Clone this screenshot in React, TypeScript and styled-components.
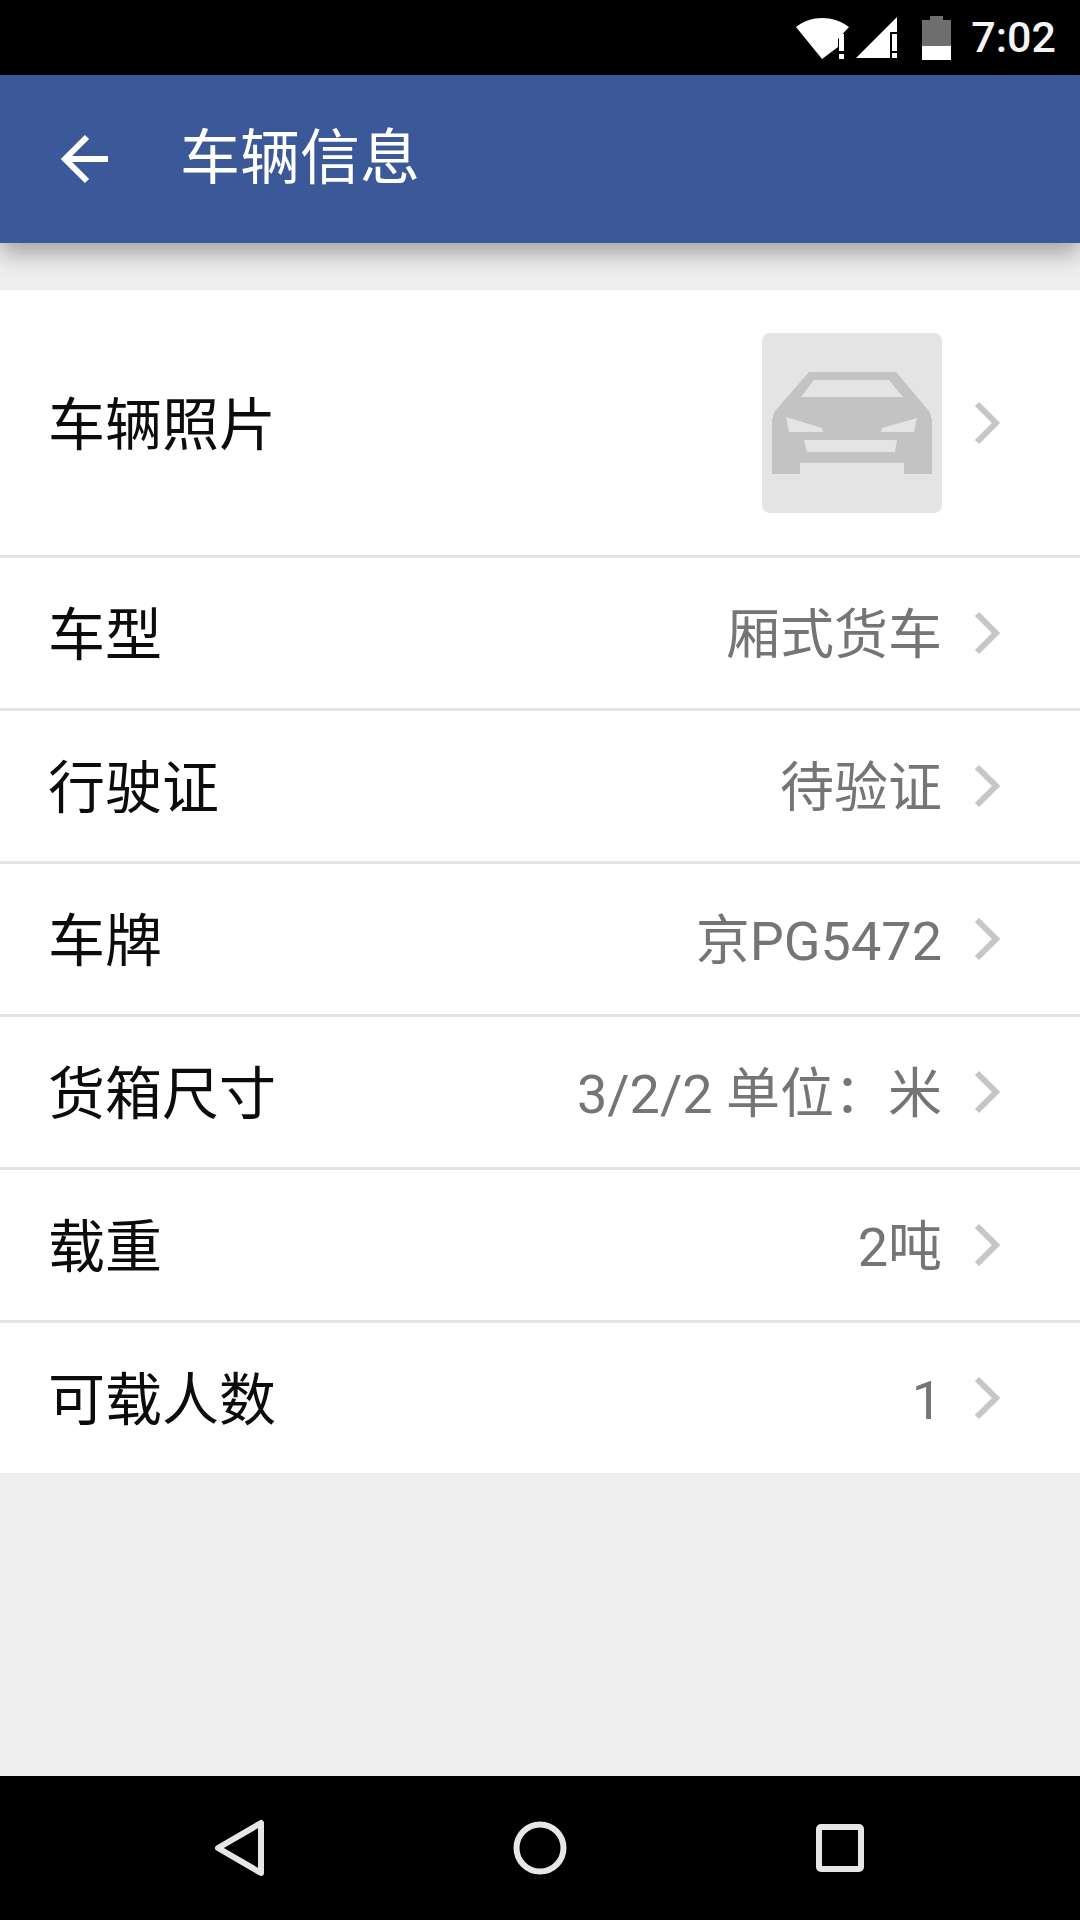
import { ReactNode } from 'react';
import styled, { createGlobalStyle } from 'styled-components';

const GlobalStyle = createGlobalStyle`
    html, body {
        margin: 0;
        padding: 0;
        background: #eeeeee;
    }
    * {
        box-sizing: border-box;
    }
`;

const Page = styled.div`
    width: 1080px;
    height: 1920px;
    display: flex;
    flex-direction: column;
    overflow: hidden;
    background: #eeeeee;
    font-family: Roboto, 'Noto Sans CJK SC', sans-serif;
`;

const StatusBar = styled.div`
    flex: 0 0 75px;
    display: flex;
    align-items: center;
    justify-content: flex-end;
    padding-right: 24px;
    background: #000;
`;

const StatusIcon = styled.svg<{ $gap: number }>`
    display: block;
    margin-right: ${({ $gap }) => $gap}px;
`;

const Clock = styled.span`
    color: #f4f4f4;
    font-size: 43px;
    font-weight: 500;
    line-height: 75px;
`;

const AppBar = styled.header`
    flex: 0 0 168px;
    position: relative;
    z-index: 1;
    display: flex;
    align-items: center;
    padding-left: 58px;
    background: #3b5998;
    box-shadow: 0 10px 22px rgba(0, 0, 0, 0.32);
`;

const BackArrow = styled.svg`
    display: block;
    flex: none;
    margin-right: 68px;
`;

const Title = styled.h1`
    margin: 0;
    color: #fff;
    font-size: 60px;
    font-weight: 400;
    line-height: 1;
`;

const Content = styled.main`
    flex: 1;
    padding-top: 47px;
`;

const List = styled.div`
    background: #fff;
`;

const Row = styled.div<{ $height: number; $last?: boolean }>`
    height: ${({ $height }) => $height}px;
    display: flex;
    align-items: center;
    justify-content: space-between;
    padding: 0 78px 0 48px;
    border-bottom: ${({ $last }) => ($last ? 'none' : '3px solid #e4e4e4')};
`;

const Label = styled.span`
    padding-top: 5px;
    color: #0c0c0c;
    font-size: 57px;
    line-height: 1;
`;

const RowEnd = styled.div`
    display: flex;
    align-items: center;
    gap: 32px;
`;

const Value = styled.span`
    padding-top: 5px;
    color: #757575;
    font-size: 54px;
    line-height: 1;
`;

const Thumb = styled.div`
    width: 180px;
    height: 180px;
    border-radius: 8px;
    background: #e4e4e4;
`;

const NavBar = styled.nav`
    flex: 0 0 144px;
    display: grid;
    grid-template-columns: repeat(3, 300px);
    justify-items: center;
    align-items: center;
    padding: 0 90px;
    background: #000;
`;

function Chevron() {
    return (
        <svg width="28" height="48" viewBox="0 0 28 48">
            <path d="M3 5 L22 24 L3 43" fill="none" stroke="#c6c6c6" strokeWidth="6" />
        </svg>
    );
}

function CarPlaceholder() {
    return (
        <Thumb>
            <svg width="180" height="180" viewBox="0 0 180 180">
                <path
                    fillRule="evenodd"
                    fill="#c3c3c3"
                    d="M47 39 H134 L167 78 L170 87 V141 H142 V130 H38 V141 H10 V87 L13 78 Z
                       M52 47 L39 64 H141 L127 47 Z
                       M24 84 L60 95 L61 99 H27 Z
                       M155 85 L120 95 L119 99 H152 Z
                       M42 107 H135 L133 119 H45 Z"
                />
            </svg>
        </Thumb>
    );
}

function InfoRow({ label, value, last }: { label: string; value: string; last?: boolean }) {
    return (
        <Row $height={last ? 150 : 153} $last={last}>
            <Label>{label}</Label>
            <RowEnd>
                <Value>{value}</Value>
                <Chevron />
            </RowEnd>
        </Row>
    );
}

function PhotoRow({ label, children }: { label: string; children: ReactNode }) {
    return (
        <Row $height={268}>
            <Label>{label}</Label>
            <RowEnd>
                {children}
                <Chevron />
            </RowEnd>
        </Row>
    );
}

const rows = [
    { label: '车型', value: '厢式货车' },
    { label: '行驶证', value: '待验证' },
    { label: '车牌', value: '京PG5472' },
    { label: '货箱尺寸', value: '3/2/2 单位：米' },
    { label: '载重', value: '2吨' },
    { label: '可载人数', value: '1' },
];

export default function App() {
    return (
        <>
            <GlobalStyle />
            <Page>
                <StatusBar>
                    <StatusIcon $gap={6} width="54" height="44" viewBox="0 0 54 44">
                        <path d="M0 11 C15 -1 37 -1 53 11 L42 23 V31 L26 43 Z" fill="#fff" />
                        <path d="M43 18 H48 V35 H43 Z M43 38 H48 V43 H43 Z" fill="#fff" />
                    </StatusIcon>
                    <StatusIcon $gap={25} width="41" height="43" viewBox="0 0 41 43">
                        <path d="M0 42 L41 1 V16 H34 V42 Z" fill="#fff" />
                        <path d="M36 18 H41 V35 H36 Z M36 37 H41 V42 H36 Z" fill="#fff" />
                    </StatusIcon>
                    <StatusIcon $gap={20} width="29" height="44" viewBox="0 0 29 44">
                        <path d="M8 0 H21 V4 H29 V30 H0 V4 H8 Z" fill="#6e6e6e" />
                        <path d="M0 30 H29 V44 H0 Z" fill="#fff" />
                    </StatusIcon>
                    <Clock>7:02</Clock>
                </StatusBar>
                <AppBar>
                    <BackArrow width="54" height="54" viewBox="0 0 54 54">
                        <path d="M50 27 H8 M29 5 L7 27 L29 49" fill="none" stroke="#fff" strokeWidth="6" />
                    </BackArrow>
                    <Title>车辆信息</Title>
                </AppBar>
                <Content>
                    <List>
                        <PhotoRow label="车辆照片">
                            <CarPlaceholder />
                        </PhotoRow>
                        {rows.map((row, i) => (
                            <InfoRow key={row.label} label={row.label} value={row.value} last={i === rows.length - 1} />
                        ))}
                    </List>
                </Content>
                <NavBar>
                    <svg width="56" height="64" viewBox="0 0 56 64">
                        <path d="M49 7 V57 L6 32 Z" fill="none" stroke="#e6e6e6" strokeWidth="6" strokeLinejoin="round" />
                    </svg>
                    <svg width="56" height="56" viewBox="0 0 56 56">
                        <circle cx="28" cy="28" r="23.5" fill="none" stroke="#e6e6e6" strokeWidth="6" />
                    </svg>
                    <svg width="56" height="56" viewBox="0 0 56 56">
                        <rect x="7" y="7" width="42" height="42" rx="2" fill="none" stroke="#e6e6e6" strokeWidth="6" strokeLinejoin="round" />
                    </svg>
                </NavBar>
            </Page>
        </>
    );
}
